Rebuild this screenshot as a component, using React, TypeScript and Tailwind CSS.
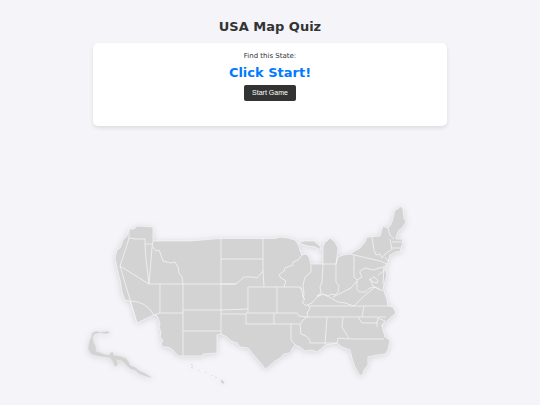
const land =
  "M129 229H134L137 226L153 227V241L190 241L213 239L221 238.5H275L280 237L288 238L295 240L298 244L300 250L302 255L306 254L309 257L311 264H323V247L325 242L327 241L330 238L335 242L338 248L337 257L336 264L338 257L343 255L350 254L360 248L365 242L367 237L380 236L383 226L388 228L390 226L392 222L395 210L398 209L400 206L403 209L404 218L406 222L402 228L399 230L396 237V239L402 239L403 243L401 247L402 251L396 252L390 255L388 262L385 268L387 275L383 288L387 300L388 306L393 307L396 313L388 320L382 326L385 337L390 340L388 350L385 354L378 355L368 357V365L364 370L362 376L359 374L355 367L352 358L350 350L342 347L337 343L325 345L322 348L317 352L312 350L305 351L300 347L295 345L292 349L290 353L284 354L280 358L275 361L268 367L265 369L263 366L258 360L253 354L248 348L240 347L237 343L231 341L227 337L221 334L217 335V353L203 354V356H178L173 350L168 347L163 347L161 344L163 340L160 337L161 332L159 327L160 323L157 316L154 315L137 323L130 301L125 300L122 292L120 280L117 268L115 258L117 250L120 248L123 240L127 236Z";

const borders = [
  "M129 229V238L136 239H145V244H153M129 238L127 245L120 266L137 323M120 266L149 284M145 244L146 259L149 284H236M153 241L152 248L149 284M153 247L156 251L159 250L161 255L163 261L167 262L171 263L175 262L178 267L179 273L182 277L183 284",
  "M130 301Q146 301 154 315L160 313H183M160 284V313M183 284V356M183 310H221M183 331H221M221 238V334M221 259H263M263 238V271L264 287M221 284H236Q241 280 244 277L253 277L257 278L263 271",
  "M248 287H300L302 289M248 287V313M277 287V313M221 310L248 309M221 314H246V324H300M246 313H297L299 316L306 317M274 313V324M291 324V340L293 342L295 345",
  "M300 250L302 255L298 260L293 262V265L285 268L284 271L279 275L281 278L286 281L284 287M300 287L302 291L303 297L305 299L302 302L306 306L308 304M311 264V272L305 277L303 285L304 294L303 299M323 264L322 282L320 287L321 293L317 296M323 264H336M336 264L336 282L339 286L338 292L335 295L331 294L328 296L323 294L317 297L313 302L308 305L310 308L307 313L308 316L303 320L300 325L301 334L306 336L310 340V343H325",
  "M309 306H388M306 317H386M317 296L323 294L329 297L338 302L345 303L354 306M333 297L343 292L351 288L357 281M327 317L325 344M343 317L342 327L348 337L350 339H384M325 343H337L338 338L349 339M364 306L362 317M358 317L362 323H377V327M377 323L378 318L385 321L381 326M354 306L363 297L375 287L383 291",
  "M350 254L380 261L387 264M354 255V277L357 280V290L360 292L365 292L370 288L375 287M357 280L362 277L360 273V271L365 268L374 270L379 268L384 267L387 264M369 280L374 277L378 280L377 283L373 282L370 279L373 286L380 290M378 275L384 271V268M384 267L383 284",
  "M372 237L374 250L376 255L380 254L382 258L385 254L391 250M388 228L390 235L394 239M390 239L392 250M392 242H403M391 248L400 248L401 251M385 257L388 261",
];

const lakePeninsula = "M298 243L304 241L314 241L320 246L321 250L315 247L308 246Z";
const northwestIsland =
  "M92 333L96 331L101 332L108 331L110 333L106 334L100 333L95 334L93 337L94 343L96 347V351L99 352L104 354L109 355L111 352L113 352L114 355L120 356L126 358L129 362L130 365L135 367L140 371L145 373L153 378L147 377L139 374L136 371L130 369L126 365L122 361L117 360L118 365L115 367L113 362L110 358L103 357L97 356L91 354L88 349L89 342L91 337Z";
const isles =
  "M191 364l2 2M191 367l2 1M198 370l1 1M205 372l1 1M211 375l1 1M215 377l2 1M221 380l2 1l1 2l-2 0Z";

export default function App() {
  return (
    <div className="min-h-screen bg-[#f4f4f9] px-4 pt-[18px] font-['DejaVu_Sans',Verdana,sans-serif] text-[#333]">
      <header className="text-center">
        <h1 className="text-[13px] leading-[17px] font-bold">USA Map Quiz</h1>
      </header>
      <main className="flex flex-col items-center">
        <section className="mt-2 flex w-full max-w-[354px] flex-col items-center rounded-[5px] bg-white px-4 pt-2 pb-[25px] shadow-[0_2px_4px_rgba(0,0,0,0.1)]">
          <p className="text-[7px] leading-[11px]">Find this State:</p>
          <h2 className="mt-[3px] text-[13px] leading-4 font-bold text-[#007bff]">Click Start!</h2>
          <button type="button" className="mt-1 rounded-[2px] bg-[#333] px-2 font-['Liberation_Sans',Arial,sans-serif] text-[7px] leading-4 text-white">
            Start Game
          </button>
        </section>
        <svg viewBox="80 196 380 190" className="mt-[70px] w-full max-w-[380px]" role="img" aria-label="Map of the United States">
          <g
            className="drop-shadow-[0_1px_3px_rgba(0,0,0,0.13)]"
            fill="#d3d3d3"
            stroke="#f4f4f6"
            strokeWidth="0.8"
            strokeLinejoin="round"
          >
            <path d={land} />
            <path d={lakePeninsula} />
            <path d={northwestIsland} strokeWidth="0.3" />
            <path d={isles} stroke="#d3d3d3" />
            {borders.map((d) => (
              <path key={d} d={d} fill="none" />
            ))}
          </g>
        </svg>
      </main>
    </div>
  );
}
